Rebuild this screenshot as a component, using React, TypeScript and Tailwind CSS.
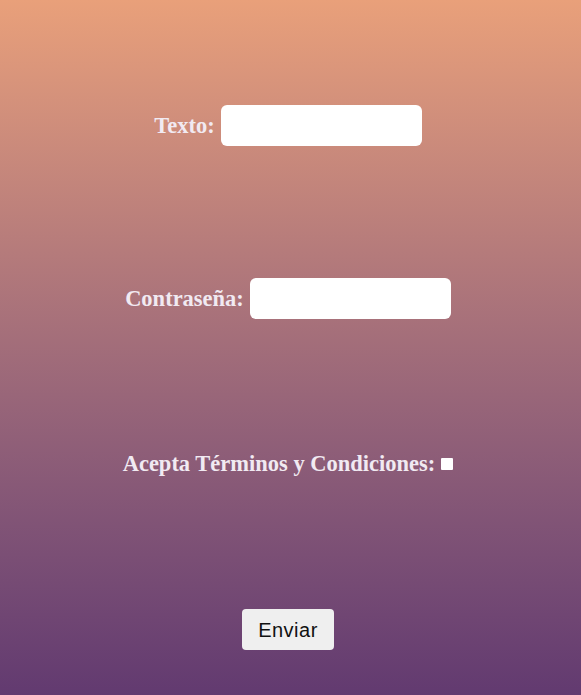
import React from "react";

export default function App() {
  return (
    <div className="w-full min-h-[695px] bg-gradient-to-b from-[#e9a07a] to-[#623a70] flex flex-col items-center pt-[105px] pb-[45px] pr-[5px] gap-[132px]">
      <div className="flex items-center h-[41px]">
        <span className="font-['Liberation_Serif',serif] font-bold text-[22.5px] text-[#f1eaf2] mr-[6px]">Texto:</span>
        <div className="w-[201px] h-[41px] bg-white rounded-[6px]" />
      </div>
      <div className="flex items-center h-[41px]">
        <span className="font-['Liberation_Serif',serif] font-bold text-[22.5px] text-[#f1eaf2] mr-[6px]">Contraseña:</span>
        <div className="w-[201px] h-[41px] bg-white rounded-[6px]" />
      </div>
      <div className="flex items-center h-[26px]">
        <span className="font-['Liberation_Serif',serif] font-bold text-[22.5px] text-[#f1eaf2] mr-[6px]">Acepta Términos y Condiciones:</span>
        <div className="w-[12px] h-[12px] bg-white rounded-[1px]" />
      </div>
      <button className="h-[41px] w-[92px] bg-[#efefef] rounded-[4px] font-['Liberation_Sans',sans-serif] text-[20px] tracking-[0.5px] text-[#111]">
        Enviar
      </button>
    </div>
  );
}
